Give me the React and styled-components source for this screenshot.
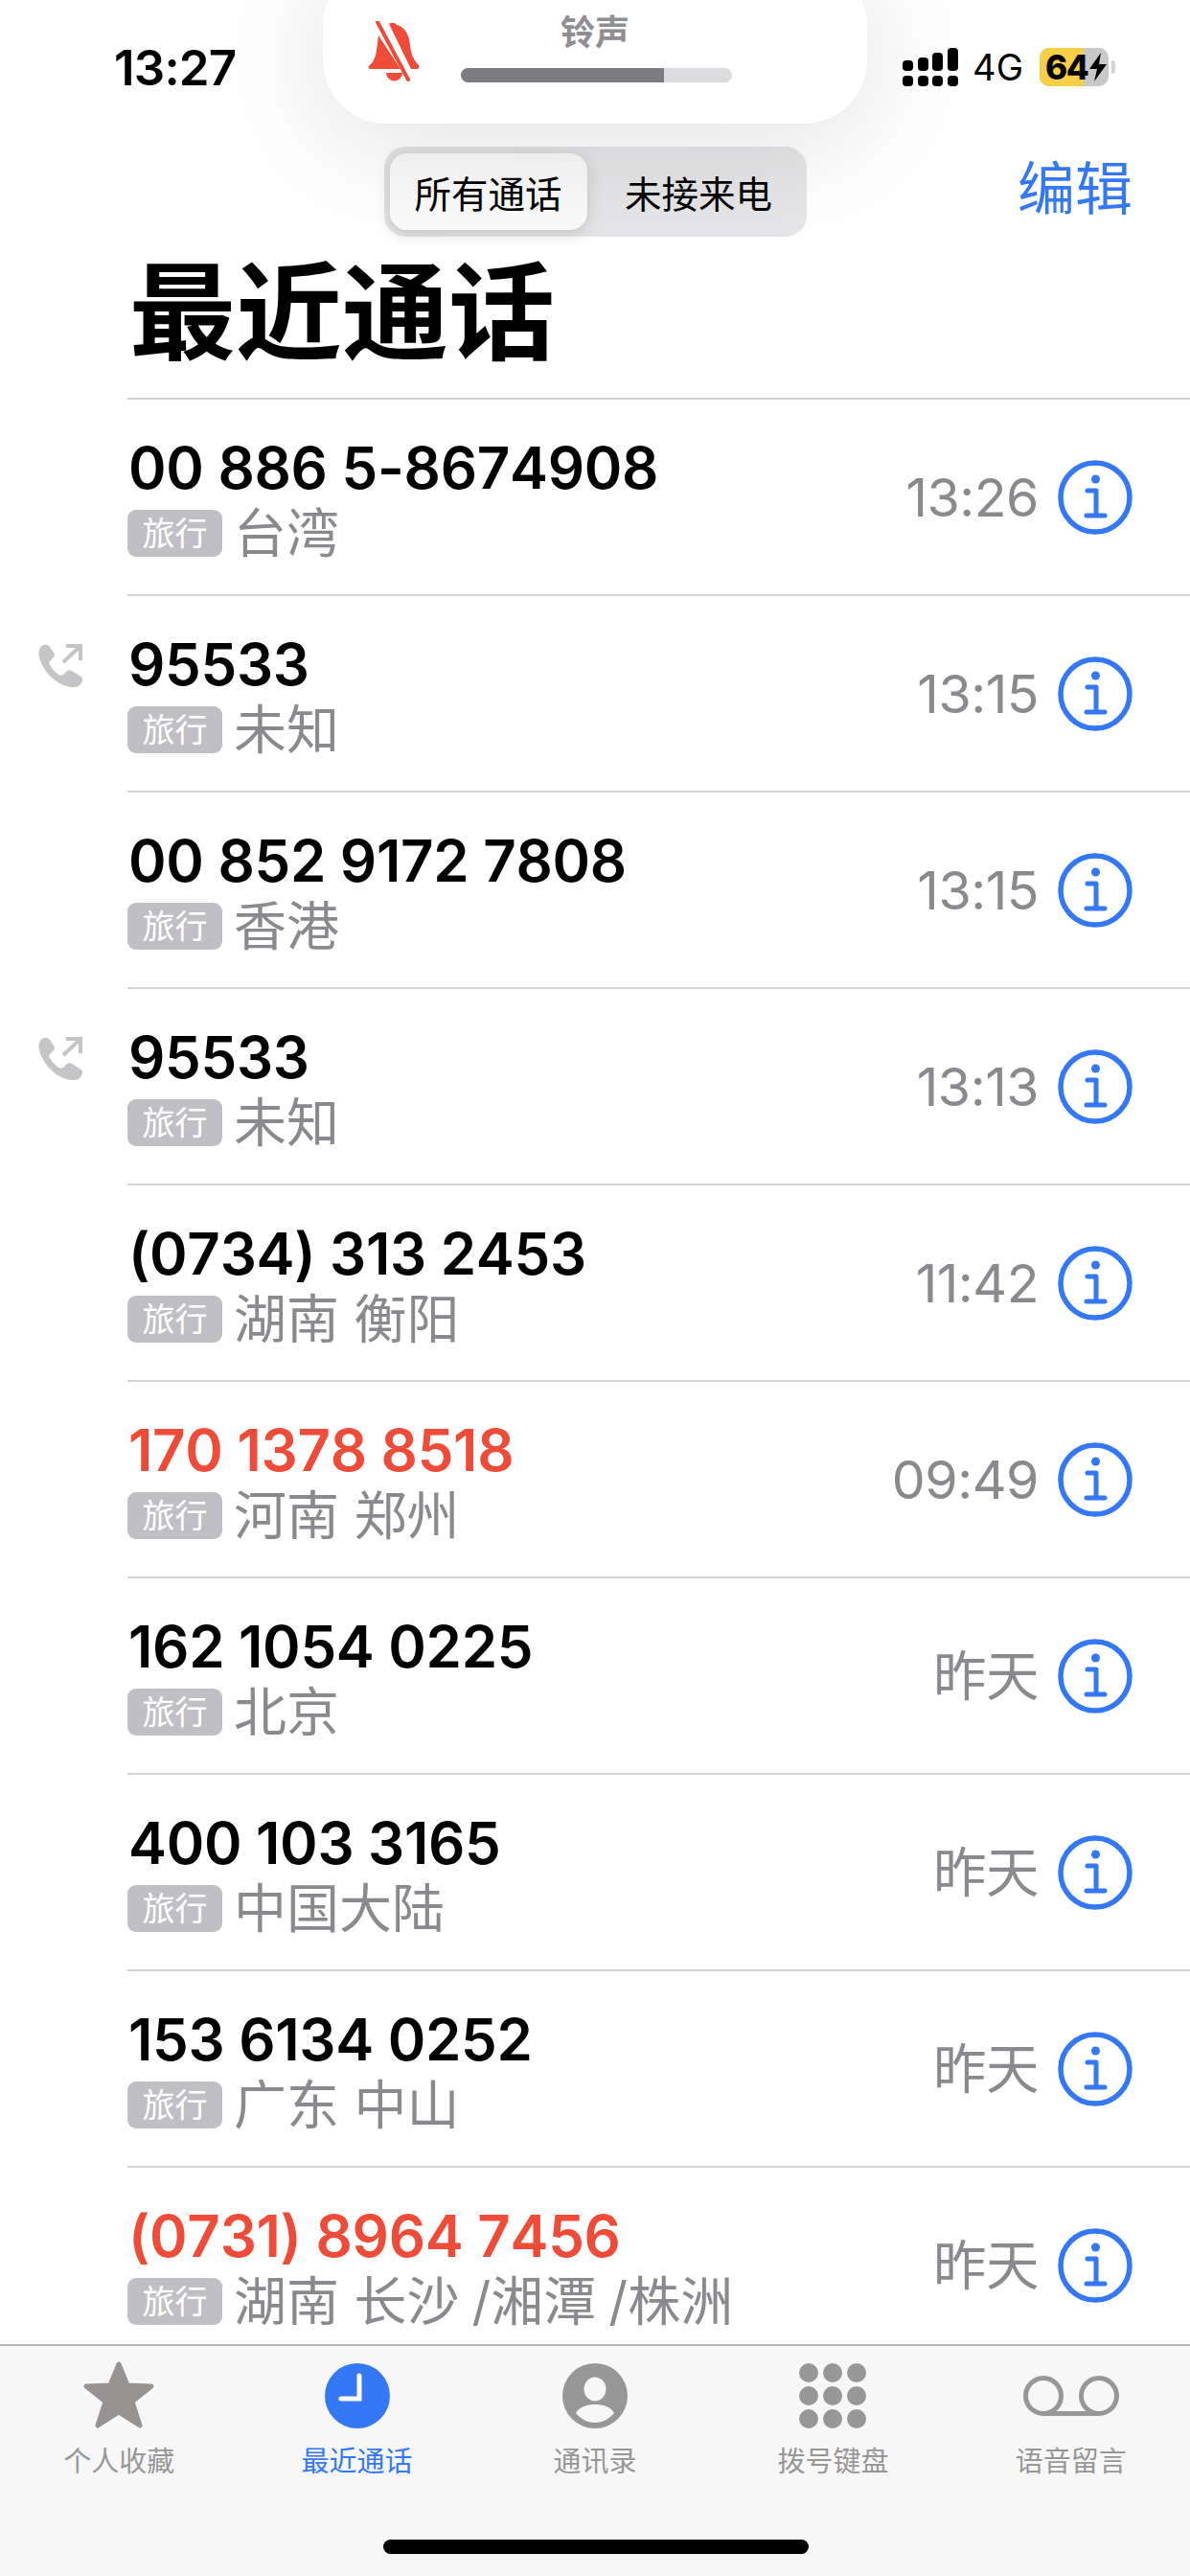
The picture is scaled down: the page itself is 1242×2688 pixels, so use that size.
import React from "react";
import styled, { createGlobalStyle } from "styled-components";

const SANS = `Inter, "Noto Sans CJK SC", sans-serif`;
const BLUE = "#3478f6";
const GREY = "#8a8a8e";

const GlobalStyle = createGlobalStyle`
  html, body {
    margin: 0;
    padding: 0;
    background: #fff;
  }
  body {
    font-family: ${SANS};
  }
`;

const Phone = styled.div`
  position: relative;
  width: 1242px;
  height: 2688px;
  display: flex;
  flex-direction: column;
  overflow: hidden;
  background: #fff;
`;

const StatusBar = styled.div`
  height: 153px;
  flex: none;
  display: flex;
  justify-content: space-between;
  align-items: flex-start;
  padding: 46px 78px 0 119px;
  box-sizing: border-box;
`;

const Clock = styled.div`
  font-size: 51px;
  line-height: 50px;
  font-weight: 600;
  color: #000;
  letter-spacing: -0.8px;
`;

const StatusRight = styled.div`
  display: flex;
  align-items: center;
  height: 40px;
  margin-top: 4px;
`;

const NetworkLabel = styled.span`
  font-size: 38px;
  line-height: 40px;
  color: #000;
  margin: 0 17px 0 15px;
`;

const Battery = styled.div`
  position: relative;
  width: 72px;
  height: 40px;
  border-radius: 10px;
  background: #c9c9c9;
  display: flex;
  align-items: center;
`;

const BatteryFill = styled.div`
  position: absolute;
  left: 0;
  top: 0;
  bottom: 0;
  width: 64%;
  border-radius: 10px 0 0 10px;
  background: #f6cf47;
`;

const BatteryText = styled.span`
  position: relative;
  font-size: 35px;
  line-height: 40px;
  font-weight: 800;
  color: #000;
  margin-left: 6px;
  letter-spacing: -1.5px;
`;

const BatteryTip = styled.div`
  width: 4px;
  height: 14px;
  margin-left: 3px;
  border-radius: 0 4px 4px 0;
  background: #d4d4d4;
`;

const Hud = styled.div`
  position: absolute;
  left: 337px;
  top: -40px;
  width: 568px;
  height: 169px;
  box-sizing: border-box;
  border-radius: 66px;
  background: #fff;
  box-shadow: 0 16px 130px rgba(0, 0, 0, 0.13);
  display: flex;
  padding: 65px 0 0 47px;
`;

const HudBody = styled.div`
  display: flex;
  flex-direction: column;
  align-items: center;
  margin-left: 43px;
  width: 283px;
`;

const HudTitle = styled.div`
  font-size: 36px;
  line-height: 38px;
  font-weight: 600;
  color: #8e8e93;
  margin-top: -10px;
  margin-left: -3px;
`;

const HudTrack = styled.div`
  width: 283px;
  height: 15px;
  margin-top: 18px;
  border-radius: 8px;
  overflow: hidden;
  background: #dcdcde;
`;

const HudFill = styled.div`
  height: 100%;
  background: #7c7c80;
`;

const NavRow = styled.div`
  position: relative;
  flex: none;
  height: 94px;
  display: flex;
  justify-content: center;
`;

const Segmented = styled.div`
  width: 441px;
  height: 94px;
  box-sizing: border-box;
  padding: 7px 4px 7px 6px;
  border-radius: 22px;
  background: #e6e6e8;
  display: flex;
`;

const Segment = styled.div`
  flex: ${(p) => (p.$active ? "0 0 206px" : "1")};
  border-radius: 18px;
  display: flex;
  align-items: center;
  justify-content: center;
  font-size: 38.5px;
  padding-bottom: 1px;
  padding-left: ${(p) => (p.$active ? "0" : "8px")};
  color: #000;
  background: ${(p) => (p.$active ? "#fafafa" : "transparent")};
  box-shadow: ${(p) => (p.$active ? "0 4px 16px rgba(0,0,0,0.14)" : "none")};
`;

const EditLink = styled.div`
  position: absolute;
  right: 60px;
  top: -3px;
  font-size: 60px;
  line-height: 94px;
  color: ${BLUE};
`;

const Title = styled.h1`
  flex: none;
  margin: 0;
  height: 168px;
  padding-left: 135px;
  font-size: 111px;
  line-height: 160px;
  font-weight: 700;
  color: #000;
`;

const CallList = styled.div`
  flex: 1;
  min-height: 0;
  overflow: hidden;
`;

const Row = styled.div`
  display: flex;
  height: 205px;
`;

const Gutter = styled.div`
  flex: 0 0 133px;
  padding: 52px 0 0 40px;
  box-sizing: border-box;
`;

const RowBody = styled.div`
  flex: 1;
  display: flex;
  align-items: flex-start;
  justify-content: space-between;
  border-top: 2px solid #d4d4d6;
  padding-right: 60px;
`;

const CallText = styled.div`
  display: flex;
  flex-direction: column;
  padding-top: 38px;
`;

const Number = styled.div`
  font-size: 60px;
  line-height: 66px;
  font-weight: 600;
  letter-spacing: -0.3px;
  margin-left: 1px;
  font-kerning: none;
  white-space: nowrap;
  color: ${(p) => (p.$missed ? "#ee4b38" : "#000")};
`;

const MetaLine = styled.div`
  display: flex;
  align-items: center;
  margin-top: 10px;
  height: 50px;
`;

const Tag = styled.span`
  flex: none;
  width: 99px;
  height: 49px;
  border-radius: 9px;
  background: #c0c0c4;
  color: #fff;
  font-size: 34px;
  line-height: 49px;
  text-align: center;
`;

const Place = styled.span`
  margin-left: 12px;
  font-size: 55px;
  line-height: 60px;
  color: ${GREY};
  white-space: nowrap;
`;

const Slash = styled.span`
  margin-left: 13px;
`;

const CallMeta = styled.div`
  display: flex;
  align-items: center;
  gap: 20px;
  margin-top: 63px;
`;

const CallTime = styled.span`
  font-size: 55.5px;
  line-height: 78px;
  color: ${GREY};
  letter-spacing: -0.5px;
`;

const TabBar = styled.div`
  position: relative;
  flex: none;
  height: 242px;
  box-sizing: border-box;
  border-top: 2px solid #b4b4b6;
  background: #f7f7f8;
  display: grid;
  grid-template-columns: repeat(5, 1fr);
  align-items: start;
  padding-top: 15px;
`;

const TabItem = styled.div`
  display: flex;
  flex-direction: column;
  align-items: center;
  color: ${(p) => (p.$active ? BLUE : "#979797")};
`;

const TabIcon = styled.div`
  height: 74px;
  display: flex;
  align-items: center;
  justify-content: center;
`;

const TabLabel = styled.div`
  font-size: 29px;
  line-height: 40px;
  margin-top: 12px;
`;

const HomeBar = styled.div`
  position: absolute;
  left: 400px;
  top: 202px;
  width: 444px;
  height: 15px;
  border-radius: 8px;
  background: #000;
`;

const SignalIcon = () => (
  <svg width="58" height="40" viewBox="0 0 58 40" fill="#000">
    <rect x="0" y="13" width="11" height="11" rx="4" />
    <rect x="16" y="10" width="11" height="14" rx="4" />
    <rect x="31" y="5" width="11" height="19" rx="4" />
    <rect x="47" y="0" width="11" height="24" rx="4" />
    <rect x="0" y="29" width="11" height="11" rx="4" />
    <rect x="16" y="29" width="11" height="11" rx="4" />
    <rect x="31" y="29" width="11" height="11" rx="4" />
    <rect x="47" y="29" width="11" height="11" rx="4" />
  </svg>
);

const BoltIcon = () => (
  <svg
    width="20"
    height="30"
    viewBox="0 0 20 30"
    style={{ position: "relative", marginLeft: 1 }}
  >
    <path d="M13 0 L1 17 H9 L6 30 L19 12 H11 Z" fill="#000" />
  </svg>
);

const MutedBell = () => (
  <svg width="54" height="64" viewBox="0 0 54 64" style={{ marginTop: -3 }}>
    <path
      d="M22 3 a5 4 0 0 1 8 1 C39 6 43 15 44 25 C45 34 47 40 53 46 C54 48 53 50 51 50 H45 Z"
      fill="#ee4b38"
    />
    <path
      d="M11 15 L34 50 H3 C0 50 0 47 2 46 C9 40 9 30 11 15 Z"
      fill="#ee4b38"
    />
    <path d="M19 54 H36 A8.5 8.5 0 0 1 19 54 Z" fill="#ee4b38" />
    <path d="M10 1 L42 61" stroke="#ee4b38" strokeWidth="4" strokeLinecap="round" />
  </svg>
);

const OutgoingCall = () => (
  <svg width="46" height="46" viewBox="0 0 46 46" fill="#c5c5c8">
    <path d="M9 1 C6 0 2 2 1 6 C-1 13 3 22 10 31 C18 40 29 46 38 45 C42 45 45 42 46 38 C46 35 45 34 43 33 L35 28 C33 27 31 27 29 29 L26 32 C24 33 22 33 20 31 C17 29 14 25 12 22 C11 20 11 19 13 17 L16 14 C17 12 17 11 16 9 L12 3 C11 2 10 1 9 1 Z" />
    <path
      d="M26 19 L43 3 M29 2 H44 V17"
      fill="none"
      stroke="#c5c5c8"
      strokeWidth="4"
    />
  </svg>
);

const InfoIcon = () => (
  <svg width="78" height="78" viewBox="0 0 78 78" fill={BLUE}>
    <circle cx="39" cy="39" r="36" fill="none" stroke={BLUE} strokeWidth="5.5" />
    <circle cx="39.5" cy="20" r="4.5" />
    <path
      d="M31 32 H40 V57 M30 58 H49"
      fill="none"
      stroke={BLUE}
      strokeWidth="5"
      strokeLinecap="round"
      strokeLinejoin="round"
    />
  </svg>
);

const StarIcon = () => (
  <svg
    width="74"
    height="72"
    viewBox="0 0 74 72"
    fill="#979392"
    style={{ marginTop: -2 }}
  >
    <path
      d="M37 4 L46 26 L71 27 L51 43 L59 68 L37 54 L15 68 L23 43 L3 27 L28 26 Z"
      stroke="#979392"
      strokeWidth="5"
      strokeLinejoin="round"
    />
  </svg>
);

const ClockIcon = () => (
  <svg width="68" height="68" viewBox="0 0 68 68">
    <circle cx="34" cy="34" r="34" fill={BLUE} />
    <path
      d="M36 13 V37 H17"
      fill="none"
      stroke="#fff"
      strokeWidth="5"
      strokeLinecap="round"
    />
  </svg>
);

const PersonIcon = () => (
  <svg width="68" height="68" viewBox="0 0 68 68">
    <circle cx="34" cy="34" r="34" fill="#979797" />
    <ellipse cx="34" cy="27" rx="11.5" ry="12.5" fill="#f7f7f8" />
    <path
      d="M14 52 C18 45 26 43 34 43 C42 43 50 45 54 52 C49 58 42 62 34 62 C26 62 19 58 14 52 Z"
      fill="#f7f7f8"
    />
  </svg>
);

const KeypadIcon = () => (
  <svg width="70" height="68" viewBox="0 0 70 68" fill="#979797">
    {[10, 34, 58].map((cy) =>
      [10, 35, 60].map((cx) => (
        <ellipse key={`${cx}-${cy}`} cx={cx} cy={cy} rx="10" ry="10" />
      ))
    )}
  </svg>
);

const VoicemailIcon = () => (
  <svg width="100" height="44" viewBox="0 0 100 44" fill="none">
    <circle cx="21" cy="22" r="18.5" stroke="#979797" strokeWidth="5" />
    <circle cx="79" cy="22" r="18.5" stroke="#979797" strokeWidth="5" />
    <path d="M21 40.5 H79" stroke="#979797" strokeWidth="5" />
  </svg>
);

const calls = [
  { number: "00 886 5-8674908", place: "台湾", time: "13:26" },
  { number: "95533", place: "未知", time: "13:15", outgoing: true },
  { number: "00 852 9172 7808", place: "香港", time: "13:15" },
  { number: "95533", place: "未知", time: "13:13", outgoing: true },
  { number: "(0734) 313 2453", place: "湖南 衡阳", time: "11:42" },
  { number: "170 1378 8518", place: "河南 郑州", time: "09:49", missed: true },
  { number: "162 1054 0225", place: "北京", time: "昨天" },
  { number: "400 103 3165", place: "中国大陆", time: "昨天" },
  { number: "153 6134 0252", place: "广东 中山", time: "昨天" },
  {
    number: "(0731) 8964 7456",
    place: "湖南 长沙/湘潭/株洲",
    time: "昨天",
    missed: true,
  },
];

const tabs = [
  { label: "个人收藏", icon: <StarIcon /> },
  { label: "最近通话", icon: <ClockIcon />, active: true },
  { label: "通讯录", icon: <PersonIcon /> },
  { label: "拨号键盘", icon: <KeypadIcon /> },
  { label: "语音留言", icon: <VoicemailIcon /> },
];

const App = () => {
  return (
    <Phone>
      <GlobalStyle />
      <StatusBar>
        <Clock>13:27</Clock>
        <StatusRight>
          <SignalIcon />
          <NetworkLabel>4G</NetworkLabel>
          <Battery>
            <BatteryFill />
            <BatteryText>64</BatteryText>
            <BoltIcon />
          </Battery>
          <BatteryTip />
        </StatusRight>
      </StatusBar>

      <NavRow>
        <Segmented>
          <Segment $active>所有通话</Segment>
          <Segment>未接来电</Segment>
        </Segmented>
        <EditLink>编辑</EditLink>
      </NavRow>

      <Title>最近通话</Title>

      <CallList>
        {calls.map((call, i) => (
          <Row key={i}>
            <Gutter>{call.outgoing && <OutgoingCall />}</Gutter>
            <RowBody>
              <CallText>
                <Number $missed={call.missed}>{call.number}</Number>
                <MetaLine>
                  <Tag>旅行</Tag>
                  <Place>
                    {call.place.split("/").map((part, j) => (
                      <React.Fragment key={j}>
                        {j > 0 && <Slash>/</Slash>}
                        {part}
                      </React.Fragment>
                    ))}
                  </Place>
                </MetaLine>
              </CallText>
              <CallMeta>
                <CallTime>{call.time}</CallTime>
                <InfoIcon />
              </CallMeta>
            </RowBody>
          </Row>
        ))}
      </CallList>

      <TabBar>
        {tabs.map((tab) => (
          <TabItem key={tab.label} $active={tab.active}>
            <TabIcon>{tab.icon}</TabIcon>
            <TabLabel>{tab.label}</TabLabel>
          </TabItem>
        ))}
        <HomeBar />
      </TabBar>

      <Hud>
        <MutedBell />
        <HudBody>
          <HudTitle>铃声</HudTitle>
          <HudTrack>
            <HudFill style={{ width: "75%" }} />
          </HudTrack>
        </HudBody>
      </Hud>
    </Phone>
  );
};

export default App;
